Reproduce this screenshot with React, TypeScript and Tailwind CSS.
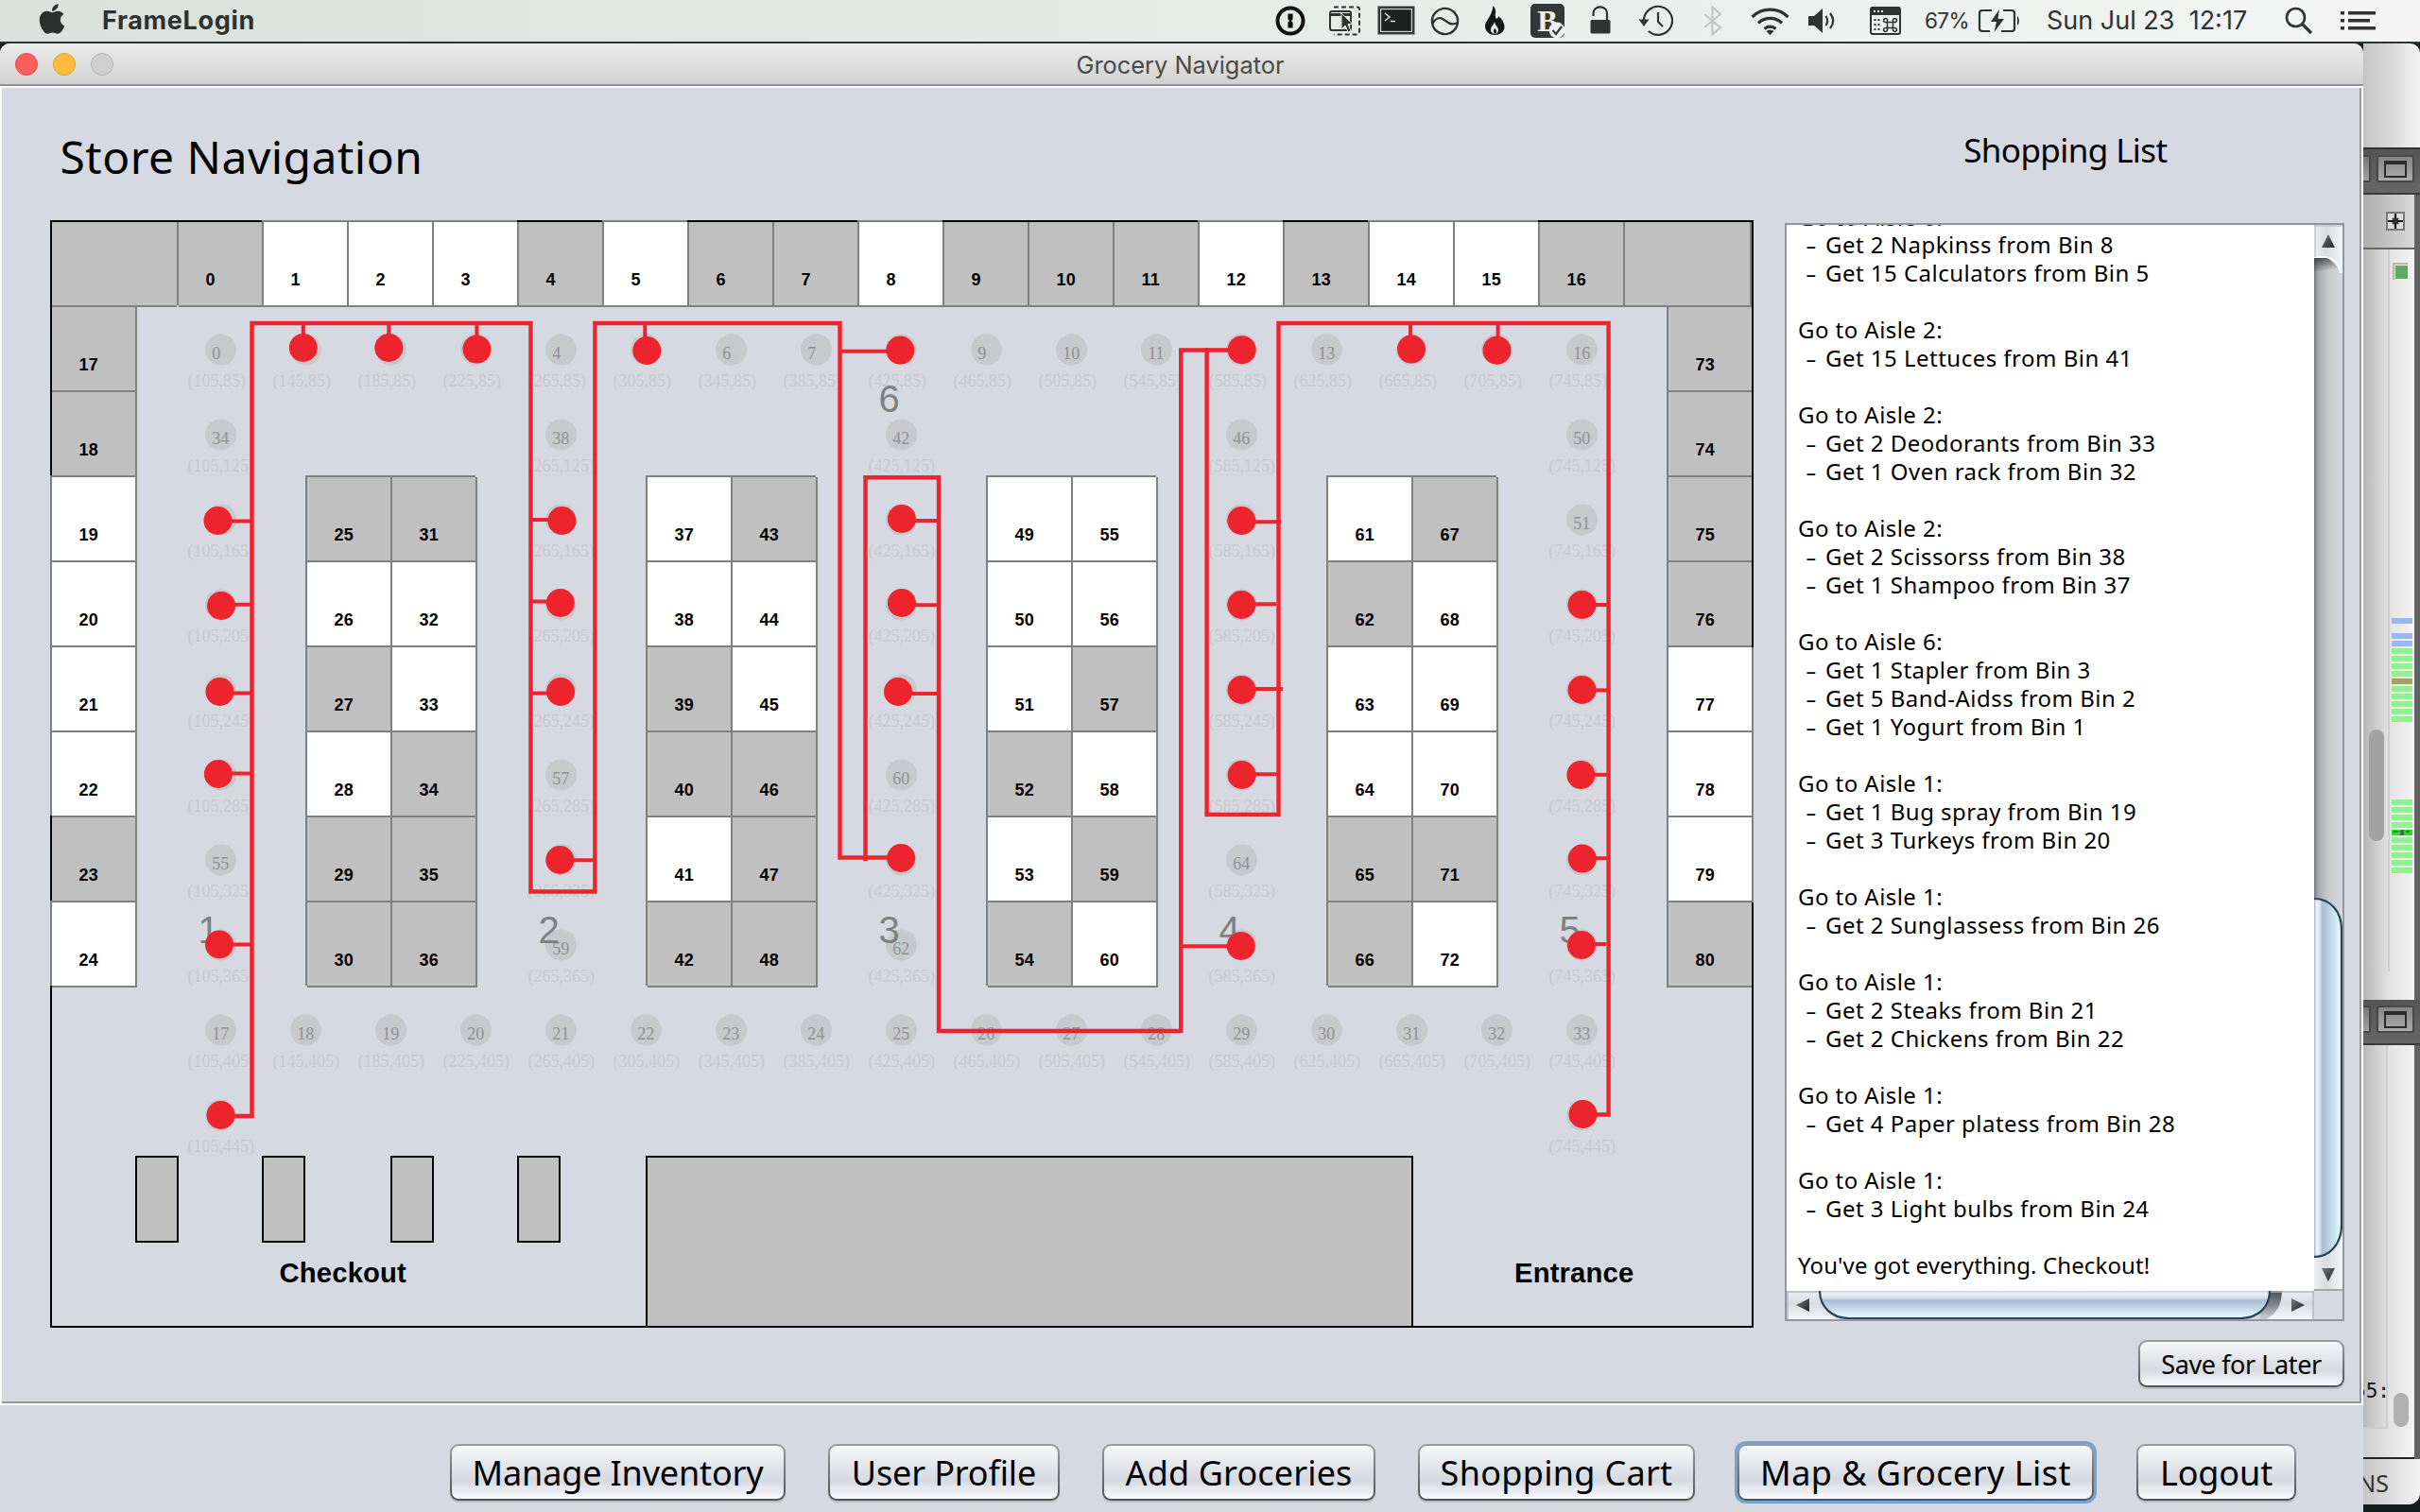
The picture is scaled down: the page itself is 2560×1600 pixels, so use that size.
import { FaApple } from "react-icons/fa";

/* ---------------------------------------------------------------- data */

const WHITE = new Set([
  1, 2, 3, 5, 8, 12, 14, 15, 19, 20, 21, 22, 24, 26, 28, 32, 33, 37, 38, 41, 44, 45, 49, 50, 51, 53, 55, 56, 58, 60,
  61, 63, 64, 68, 69, 70, 72, 77, 78, 79,
]);

const range = (from: number, count: number) => Array.from({ length: count }, (_, i) => from + i);

const TOP_BINS = range(0, 17);
const LEFT_BINS = range(17, 8);
const RIGHT_BINS = range(73, 8);
const SHELVES = [25, 37, 49, 61];

/* Waypoints live in store units; 1 unit is 2.25 px. */
const COLS = [105, 265, 425, 585, 745];
const NODE_IDS: Record<string, number> = {
  "105,125": 34, "265,125": 38, "425,125": 42, "585,125": 46, "745,125": 50,
  "745,165": 51, "265,285": 57, "425,285": 60, "105,325": 55, "585,325": 64,
  "265,365": 59, "425,365": 62,
};
const HIDDEN_TOP = new Set([1, 2, 3, 5, 8, 12, 14, 15]);

type Node = { x: number; y: number; id?: number };
const NODES: Node[] = [
  ...range(0, 17).map((i) => ({ x: 105 + i * 40, y: 85, id: HIDDEN_TOP.has(i) ? undefined : i })),
  ...COLS.flatMap((x) => [125, 165, 205, 245, 285, 325, 365].map((y) => ({ x, y, id: NODE_IDS[`${x},${y}`] }))),
  ...range(0, 17).map((i) => ({ x: 105 + i * 40, y: 405, id: 17 + i })),
  { x: 105, y: 445 },
  { x: 745, y: 445 },
];
const px = (x: number) => 233.5 + (x - 105) * 2.25;
const py = (y: number) => 370 + (y - 85) * 2.25;

const AISLES: [string, number, number][] = [
  ["1", 209.5, 997.5], ["2", 569.5, 997.5], ["3", 929.5, 997.5], ["4", 1289.5, 997.5], ["5", 1649.5, 997.5], ["6", 929.5, 435.5],
];

const ROUTE = [
  "M234 1181H266.5V342H561.4V943.5H629.4V342H888.5V907.5H953",
  "M915.5 909V505.2H993V1091H1249.2V370.5H1313",
  "M1276.6 370.5V862H1352.5V342H1701.6V1179.5H1674",
];

/* stop: centre x, centre y, and the spur that ties it to the route */
const STOPS: [number, number, string][] = [
  [320.8, 368, "M320.8 342V368"], [411.3, 368, "M411.3 342V368"], [504.4, 369.6, "M504.4 342V368"],
  [684.3, 371, "M682.3 342V368"], [952.3, 370.6, "M888 371.8H952"], [1313.7, 370.2, ""],
  [1493, 369.6, "M1492 342V368"], [1583.5, 370.7, "M1584.6 342V368"],
  [230.4, 551, "M230 551.6H266"], [234, 641, "M234 639.8H268"], [232.5, 732, "M232 733.6H268"],
  [230.9, 819, "M231 818.5H268"], [232, 999.5, "M232 999.5H268"], [233.5, 1180, ""],
  [594.4, 551, "M561 550H594"], [592.8, 638, "M560 636.4H593"], [593, 732, "M561 733.6H593"], [592.3, 910, "M592 910.3H629"],
  [953.9, 549, "M954 551H993"], [953.9, 638, "M954 640.3H994"], [950, 732, "M950 734H993"], [953.2, 908, ""],
  [1313.3, 551, "M1313 552.2H1355"], [1313.3, 640, "M1313 639.3H1350"], [1313.5, 730, "M1313 729H1357"],
  [1313.6, 820, "M1313 819.3H1352"], [1312.8, 1001, "M1249 1001.2H1313"],
  [1673.5, 640, "M1673 640H1702"], [1673.5, 730, "M1673 730.4H1703"], [1672.4, 820, "M1672 819.8H1701"],
  [1673.8, 908.6, "M1674 908.2H1701"], [1673, 1000, "M1673 999H1699"], [1674.5, 1179, ""],
];

const LIST: string[] = [
  "Go to Aisle 6:", "- Get 2 Napkinss from Bin 8", "- Get 15 Calculators from Bin 5", "",
  "Go to Aisle 2:", "- Get 15 Lettuces from Bin 41", "",
  "Go to Aisle 2:", "- Get 2 Deodorants from Bin 33", "- Get 1 Oven rack from Bin 32", "",
  "Go to Aisle 2:", "- Get 2 Scissorss from Bin 38", "- Get 1 Shampoo from Bin 37", "",
  "Go to Aisle 6:", "- Get 1 Stapler from Bin 3", "- Get 5 Band-Aidss from Bin 2", "- Get 1 Yogurt from Bin 1", "",
  "Go to Aisle 1:", "- Get 1 Bug spray from Bin 19", "- Get 3 Turkeys from Bin 20", "",
  "Go to Aisle 1:", "- Get 2 Sunglassess from Bin 26", "",
  "Go to Aisle 1:", "- Get 2 Steaks from Bin 21", "- Get 2 Chickens from Bin 22", "",
  "Go to Aisle 1:", "- Get 4 Paper platess from Bin 28", "",
  "Go to Aisle 1:", "- Get 3 Light bulbs from Bin 24", "",
  "You've got everything. Checkout!",
];

/* ------------------------------------------------------------ menu bar */

function MenuIcons() {
  return (
    <div className="ml-auto flex h-[44px] w-[1211px] shrink-0 items-center text-[#2f3332]">
      <svg className="w-[32px] h-[32px]" viewBox="0 0 32 32">
        <circle cx="16" cy="16" r="13.5" fill="none" stroke="#111" strokeWidth="4" />
        <path d="M13.4 8.5h5.2v6l-1.6 1.6 1.6 1.6v5.8h-5.2v-6l1.6-1.6-1.6-1.6z" fill="#111" />
      </svg>
      <svg className="ml-[25px] w-[33px] h-[32px]" viewBox="0 0 33 32" fill="none" stroke="currentColor" strokeWidth="2">
        <rect x="1" y="6" width="22" height="20" rx="2" />
        <path d="M1 9.5h22" strokeWidth="3" />
        <path d="M5 1.5h25a2 2 0 0 1 2 2v25a2 2 0 0 1-2 2H5" strokeDasharray="5 3" />
        <path d="M13 8v17l4-4 3 7 3-1.5-3-7h5z" fill="currentColor" stroke="#e8edea" strokeWidth="1" />
      </svg>
      <svg className="ml-[18px] w-[41px] h-[32px]" viewBox="0 0 41 32">
        <rect x="1.5" y="1.5" width="37" height="28" fill="#1d201f" stroke="#3b3e3d" strokeWidth="2" />
        <rect x="3.6" y="3.6" width="32.8" height="23.8" fill="none" stroke="#cfd3d1" strokeWidth="1.2" />
        <path d="M8 8l5 4-5 4M14 16.5h5" fill="none" stroke="#dde" strokeWidth="1.6" />
      </svg>
      <svg className="ml-[15px] w-[31px] h-[31px]" viewBox="0 0 31 31" fill="none" stroke="currentColor" strokeWidth="2.4">
        <circle cx="15.5" cy="15.5" r="13.6" />
        <path d="M2.5 18C5 13 9 11 13 13s8 8 16 4" />
      </svg>
      <svg className="ml-[26px] w-[22px] h-[32px]" viewBox="0 0 22 32">
        <path d="M9.500 0c5 6 1 9 3 13 1 2 2.500 0 2.500-2 4 3 6.500 7 6.500 11.500C21.500 28 16.500 31 11 31S1 27 1 21.500 8 12 9.500 0z" fill="#161817" />
        <path d="M11 17c-1 4-4 5-4 8.500 0 3 2 4.300 4.500 4.300S15 28 15 25.500s-3-4-4-8.500z" fill="#e9edeb" />
        <path d="M11.500 24c-2 1.500-2 5 0 5.500 2-.5 2-4 0-5.500z" fill="#161817" />
      </svg>
      <span className="relative ml-[27px] flex h-[36px] w-[36px] items-center justify-center rounded-[5px] bg-[#333736] font-['Liberation_Serif'] text-[32px] font-bold leading-none text-[#eef1ef]">
        B
        <svg className="absolute -bottom-[1px] -right-[1px] w-[18px] h-[18px]" viewBox="0 0 18 18">
          <circle cx="9" cy="9" r="8.500" fill="#eef1ef" />
          <path d="M4.500 9l3.500 4 6-8" fill="none" stroke="#333736" strokeWidth="2.200" />
        </svg>
      </span>
      <svg className="ml-[27px] w-[22px] h-[32px]" viewBox="0 0 22 32">
        <path d="M3.500 11V8a6.500 6 0 0 1 14.500 0V16" fill="none" stroke="currentColor" strokeWidth="2.200" />
        <rect x="0.500" y="15" width="21" height="14.500" rx="1.500" fill="currentColor" />
      </svg>
      <svg className="ml-[29px] w-[37px] h-[34px]" viewBox="0 0 37 34" fill="none" stroke="currentColor" strokeWidth="2.200">
        <path d="M6 17A15 15 0 1 1 11 28" />
        <path d="M0.500 15.500h11L6 23z" fill="currentColor" stroke="none" />
        <path d="M21 8v10l5 5" />
      </svg>
      <svg className="ml-[32px] w-[20px] h-[32px]" viewBox="0 0 20 32" fill="none" stroke="#bfc3c1" strokeWidth="2">
        <path d="M1 9l17 14-8.500 7.500V1.500L18 9 1 23" />
      </svg>
      <svg className="ml-[30px] w-[41px] h-[32px]" viewBox="0 0 41 32" fill="none" stroke="currentColor" strokeWidth="3.200">
        <path d="M1.500 12a27 27 0 0 1 38 0M8 18.500a18 18 0 0 1 25 0M14.500 24.500a9 9 0 0 1 12 0" />
        <path d="M16.500 27a5.800 5.800 0 0 1 8 0l-4 4.200z" fill="currentColor" stroke="none" />
      </svg>
      <svg className="ml-[20px] w-[28px] h-[28px]" viewBox="0 0 28 28">
        <path d="M0 9h6l9-8v26l-9-8H0z" fill="currentColor" />
        <path d="M18.500 9c2 3 2 7 0 10M23 6c4 5 4 11 0 16" fill="none" stroke="currentColor" strokeWidth="2.200" />
      </svg>
      <svg className="ml-[37px] w-[33px] h-[30px]" viewBox="0 0 33 30" fill="none" stroke="currentColor" strokeWidth="2">
        <rect x="1" y="1" width="31" height="28" rx="2" />
        <path d="M1 5.500h31" strokeWidth="7" />
        <path d="M4 5h2M8 5h2M12 5h2" stroke="#eef1ef" />
        <path d="M4.500 14h2M8.500 14h2M4.500 19h2M8.500 19h2M4.500 24h2M8.500 24h2" />
        <path d="M18.500 16.500h6v6h-6zM18.500 16.500h-1.500a2 2 0 1 1 1.500-1.500zM24.500 16.500V15a2 2 0 1 1 1.500 1.500zM24.500 22.500H26a2 2 0 1 1-1.500 1.500zM18.500 22.500V24a2 2 0 1 1-1.500-1.500z" strokeWidth="1.600" />
      </svg>
      <span className="ml-[25px] w-[56px] font-['Inter'] text-[22.500px] tracking-[-0.600px]">67%</span>
      <svg className="w-[46px] h-[28px]" viewBox="0 0 46 28" fill="none" stroke="currentColor" strokeWidth="2.200">
        <path d="M15 3H5a3 3 0 0 0-3 3v16a3 3 0 0 0 3 3h8M27 3h9a3 3 0 0 1 3 3v16a3 3 0 0 1-3 3H25" />
        <path d="M42 9c2.500 2 2.500 8 0 10z" fill="currentColor" stroke="none" />
        <path d="M23 2l-9 13h6l-2.500 11L28 12h-6.500z" fill="currentColor" stroke="none" />
      </svg>
      <span className="ml-[27px] w-[252px] whitespace-pre font-['Inter'] text-[27px] tracking-[0px]">Sun Jul 23  12:17</span>
      <svg className="w-[30px] h-[30px]" viewBox="0 0 30 30" fill="none" stroke="currentColor" strokeWidth="2.600">
        <circle cx="11.500" cy="11.500" r="9.500" />
        <path d="M18.500 18.500L28 28" strokeWidth="3.200" />
      </svg>
      <svg className="ml-[29px] w-[37px] h-[22px]" viewBox="0 0 37 22" fill="currentColor">
        <path d="M0 1h4v3.500H0zM0 9h4v3.500H0zM0 17h4v3.500H0zM8 1h29v3.500H8zM8 9h23v3.500H8zM8 17h29v3.500H8z" />
      </svg>
    </div>
  );
}

/* ----------------------------------------------------------- store map */

type Edge = "top" | "left" | "right" | "none";

function Bin({ n, edge = "none" }: { n: number; edge?: Edge }) {
  const white = WHITE.has(n);
  const border = white
    ? "z-10 bg-white shadow-[inset_2px_2px_0_#808080,2px_2px_0_#808080]"
    : edge === "top"
      ? "bg-[#c0c0c0] shadow-[inset_0_2px_0_#000,inset_2px_0_0_#808080,2px_2px_0_#808080]"
      : edge === "left"
        ? "bg-[#c0c0c0] shadow-[inset_2px_0_0_#000,inset_0_2px_0_#808080,2px_2px_0_#808080]"
        : edge === "right"
          ? "bg-[#c0c0c0] shadow-[inset_2px_2px_0_#808080,0_2px_0_#808080,2px_2px_0_#000]"
          : "bg-[#c0c0c0] shadow-[inset_2px_2px_0_#808080,2px_2px_0_#808080]";
  return (
    <div className={`relative h-[90px] w-[90px] shrink-0 pl-[30.500px] pt-[52px] font-['Liberation_Sans'] text-[18px] font-bold leading-[22px] tracking-[0.200px] text-black ${border}`}>
      {n}
    </div>
  );
}

function Column({ bins, edge }: { bins: number[]; edge?: Edge }) {
  return (
    <div className="flex flex-col">
      {bins.map((n) => (
        <Bin key={n} n={n} edge={edge} />
      ))}
    </div>
  );
}

function Register() {
  return <div className="h-[92px] w-[46px] border-2 border-black bg-[#c0c0c0]" />;
}

function RouteOverlay() {
  return (
    <svg className="absolute left-0 top-0 z-20 h-[1172px] w-[1802px]" viewBox="53 233 1802 1172">
      <g fontFamily="'Liberation Serif', serif" fontSize="18">
        {NODES.map((n) => (
          <g key={`${n.x},${n.y}`}>
            <circle cx={px(n.x)} cy={py(n.y)} r="16.500" fill="#c7c9cd" />
            {n.id !== undefined && (
              <text x={px(n.x) - 9.300} y={py(n.y) + 9.600} fill="#8f9196">
                {n.id}
              </text>
            )}
            <text x={px(n.x) - 35} y={py(n.y) + 39} fill="#c8cace">{`(${n.x},${n.y})`}</text>
          </g>
        ))}
      </g>
      <g fontFamily="'Liberation Sans', sans-serif" fontSize="40" fill="#808080">
        {AISLES.map(([t, x, y]) => (
          <text key={t} x={x} y={y}>
            {t}
          </text>
        ))}
      </g>
      <g fill="none" stroke="#ed232d" strokeWidth="4.400" strokeLinecap="square">
        {ROUTE.map((d) => (
          <path key={d} d={d} />
        ))}
      </g>
      <g stroke="#ed232d" strokeWidth="4" fill="none">
        {STOPS.map(([x, y, spur]) => (
          <g key={`${x}-${y}`}>
            {spur && <path d={spur} />}
            <circle cx={x} cy={y} r="15" fill="#ed232d" stroke="none" />
          </g>
        ))}
      </g>
    </svg>
  );
}

function StoreMap() {
  return (
    <div className="relative h-[1172px] w-[1802px] shrink-0">
      <div className="absolute inset-0 border-2 border-black" />
      <div className="flex">
        <div className="h-[90px] w-[134px] bg-[#c0c0c0] shadow-[inset_2px_2px_0_#000,0_2px_0_#808080]" />
        {TOP_BINS.map((n) => (
          <Bin key={n} n={n} edge="top" />
        ))}
        <div className="relative h-[90px] w-[136px] bg-[#c0c0c0] shadow-[inset_0_2px_0_#000,inset_2px_0_0_#808080,inset_-2px_0_0_#808080,0_2px_0_#808080,2px_0_0_#000]" />
      </div>
      <div className="flex h-[720px] w-[1800px] justify-between">
        <Column bins={LEFT_BINS} edge="left" />
        {SHELVES.map((first) => (
          <div key={first} className="flex pt-[180px]">
            <Column bins={range(first, 6)} />
            <Column bins={range(first + 6, 6)} />
          </div>
        ))}
        <Column bins={RIGHT_BINS} edge="right" />
      </div>
      <div className="flex pt-[180px] font-['Liberation_Sans'] text-[29.250px] font-bold leading-[34px] text-black">
        <div className="w-[630px]">
          <div className="flex pl-[90px]">
            <Register />
            <div className="w-[88px]" />
            <Register />
            <div className="w-[90px]" />
            <Register />
            <div className="w-[88px]" />
            <Register />
          </div>
          <div className="pl-[242.500px] pt-[15px] tracking-[0.150px]">Checkout</div>
        </div>
        <div className="h-[182px] w-[812px] border-2 border-black bg-[#c0c0c0]" />
        <div className="pl-[107px] pt-[107px] tracking-[0.150px]">Entrance</div>
      </div>
      <RouteOverlay />
    </div>
  );
}

/* -------------------------------------------------------- shopping list */

function VerticalScrollbar() {
  return (
    <svg className="h-[1128px] w-[30px] shrink-0" viewBox="0 0 30 1128">
      <defs>
        <linearGradient id="vtrack">
          <stop offset="0" stopColor="#77797c" />
          <stop offset="0.150" stopColor="#a9abae" />
          <stop offset="0.500" stopColor="#c9cbcf" />
          <stop offset="1" stopColor="#d4d6dc" />
        </linearGradient>
        <linearGradient id="vthumb">
          <stop offset="0" stopColor="#9fb0c4" />
          <stop offset="0.080" stopColor="#eef2f8" />
          <stop offset="0.200" stopColor="#dce6f0" />
          <stop offset="0.300" stopColor="#a7bdd4" />
          <stop offset="0.650" stopColor="#c4dcec" />
          <stop offset="1" stopColor="#e6ffff" />
        </linearGradient>
        <linearGradient id="vbtn">
          <stop offset="0" stopColor="#eceef1" />
          <stop offset="0.450" stopColor="#d8dbe0" />
          <stop offset="1" stopColor="#f6f9fb" />
        </linearGradient>
        <linearGradient id="vshade" x1="0" y1="0" x2="0.300" y2="1">
          <stop offset="0" stopColor="#3c3e41" />
          <stop offset="1" stopColor="#3c3e41" stopOpacity="0" />
        </linearGradient>
        <linearGradient id="arrow" x1="0" y1="0" x2="1" y2="1">
          <stop offset="0" stopColor="#777" />
          <stop offset="1" stopColor="#222" />
        </linearGradient>
      </defs>
      <rect width="30" height="1128" fill="url(#vtrack)" />
      <path d="M0 34H14L26 46 0 50z" fill="url(#vshade)" />
      <path d="M0 0H30V51H28C26 42 20 34 11 34H0z" fill="url(#vbtn)" />
      <path d="M0 34H11C20 34 26 42 28 51" fill="none" stroke="#f7f9fb" strokeWidth="2" />
      <path d="M0 1H30M1 0V34" stroke="#c6c8cb" strokeWidth="1.500" />
      <path d="M15 10L22 24H8z" fill="url(#arrow)" />
      <path d="M0 1093C14 1092 24 1082 30 1066V1128H0z" fill="url(#vbtn)" />
      <path d="M0 1127H30" stroke="#a5a7ab" strokeWidth="2" />
      <path d="M0 713C17 713 29 726 29 746V1058C29 1078 17 1092 0 1092z" fill="url(#vthumb)" />
      <path d="M0 713C17 713 29 726 29 746V1058C29 1078 17 1092 0 1092" fill="none" stroke="#2b4257" strokeWidth="2.200" />
      <path d="M15 1118L22 1104H8z" fill="url(#arrow)" />
    </svg>
  );
}

function HorizontalScrollbar() {
  return (
    <svg className="h-[30px] w-[558px] shrink-0" viewBox="0 0 558 30">
      <defs>
        <linearGradient id="hthumb" x2="0" y2="1">
          <stop offset="0" stopColor="#c3cfdd" />
          <stop offset="0.100" stopColor="#eef2f8" />
          <stop offset="0.250" stopColor="#d4e0ec" />
          <stop offset="0.350" stopColor="#a7bdd4" />
          <stop offset="0.650" stopColor="#c4dcec" />
          <stop offset="1" stopColor="#e6ffff" />
        </linearGradient>
        <linearGradient id="hbtn" x2="0" y2="1">
          <stop offset="0" stopColor="#eceef1" />
          <stop offset="0.450" stopColor="#d8dbe0" />
          <stop offset="1" stopColor="#f6f9fb" />
        </linearGradient>
        <linearGradient id="htrack" x2="0" y2="1">
          <stop offset="0" stopColor="#4b4d50" />
          <stop offset="0.500" stopColor="#85878b" />
          <stop offset="1" stopColor="#d0d2d8" />
        </linearGradient>
      </defs>
      <rect width="558" height="30" fill="#d6d9e1" />
      <path d="M0 0H35C35 12 42 24 52 30H0z" fill="url(#hbtn)" />
      <path d="M505 0H524C524 14 520 22 512 30H500z" fill="url(#htrack)" />
      <path d="M558 0H524C524 14 519 23 508 30H558z" fill="url(#hbtn)" />
      <path d="M0 1H558M1 0V30M557 0V30" stroke="#b4b6ba" strokeWidth="1.500" />
      <path d="M35 0C35 17 48 29 66 29H480C499 29 511 17 511 0z" fill="url(#hthumb)" />
      <path d="M35 0C35 17 48 29 66 29H480C499 29 511 17 511 0" fill="none" stroke="#2b4257" strokeWidth="2.200" />
      <path d="M10 15L24 8V22z" fill="url(#arrow)" />
      <path d="M548 15L534 8V22z" fill="url(#arrow)" />
    </svg>
  );
}

function ShoppingList() {
  return (
    <div className="h-[1162px] w-[592px] border-2 border-[#9297a3] bg-[#d6d9e1]">
      <div className="flex h-[1128px]">
        <div className="w-[558px] overflow-hidden bg-white pl-[12px]">
          <div className="-mt-[24px] font-['Noto_Sans'] text-[24px] leading-[30px] text-black">
            {LIST.map((line, i) =>
              line.startsWith("- ") ? (
                <div key={i} className="flex h-[30px] whitespace-pre tracking-[0.480px]">
                  <span className="w-[29px] pl-[10px]">
                    <span className="inline-block scale-x-150">-</span>
                  </span>
                  {line.slice(2)}
                </div>
              ) : (
                <div
                  key={i}
                  className={`h-[30px] whitespace-pre ${i === 0 ? "pt-px" : ""} ${line.startsWith("You") ? "tracking-[0.120px]" : "tracking-[0.450px]"}`}
                >
                  {line}
                </div>
              ),
            )}
          </div>
        </div>
        <VerticalScrollbar />
      </div>
      <HorizontalScrollbar />
    </div>
  );
}

/* -------------------------------------------------------------- buttons */

function Button({ label, size, focused = false }: { label: string; size: string; focused?: boolean }) {
  return (
    <div
      className={`rounded-[9px] bg-linear-to-b from-[#989ca3] to-[#505358] p-[2px] ${size} ${
        focused ? "shadow-[0_0_0_3px_#73a4d1]" : "shadow-[0_2px_1px_#b9bcc2]"
      }`}
    >
      <div className="flex h-full items-center justify-center whitespace-nowrap rounded-[7px] bg-linear-to-b from-[#f7f8fa] via-[#d6d9e0] via-65% to-[#fbfcff] pt-[2px] font-['Noto_Sans'] text-black">
        {label}
      </div>
    </div>
  );
}

/* --------------------------------------------- editor window at the right */

const MARKS: [string, string][] = [
  ["bg-[#96b9ee]", "mb-[10px]"], ["bg-[#96b9ee]", "mb-[2px]"], ["bg-[#96b9ee]", "mb-[2px]"],
  ["bg-[#90f290]", "mb-[2px]"], ["bg-[#90f290]", "mb-[2px]"], ["bg-[#90f290]", "mb-[2px]"], ["bg-[#90f290]", "mb-[2px]"],
  ["bg-[#a5a05f]", "mb-[2px]"],
  ["bg-[#90f290]", "mb-[2px]"], ["bg-[#90f290]", "mb-[2px]"], ["bg-[#90f290]", "mb-[2px]"], ["bg-[#90f290]", "mb-[2px]"],
  ["bg-[#90f290]", "mb-[82px]"],
  ["bg-[#90f290]", "mb-[2px]"], ["bg-[#90f290]", "mb-[2px]"], ["bg-[#90f290]", "mb-[2px]"], ["bg-[#90f290]", "mb-[2px]"],
  ["bg-[#10ee10]", "mb-[2px]"],
  ["bg-[#90f290]", "mb-[2px]"], ["bg-[#90f290]", "mb-[2px]"], ["bg-[#90f290]", "mb-[2px]"], ["bg-[#90f290]", "mb-[2px]"],
  ["bg-[#90f290]", ""],
];

function PaneHeader() {
  return (
    <div className="flex h-[48px] w-[60px] shrink-0 items-start gap-[6px] border-b-2 border-[#3a3a3a] bg-linear-to-b from-[#555] to-[#666] pt-[6px]">
      <div className="h-[29px] w-[8px] rounded-r-[3px] border-2 border-l-0 border-[#474747] bg-linear-to-b from-[#777] to-[#a2a2a2]" />
      <div className="flex h-[29px] w-[40px] items-center justify-center rounded-[3px] border-2 border-[#474747] bg-linear-to-b from-[#858585] to-[#acacac]">
        <div className="h-[18px] w-[24px] border-2 border-t-4 border-[#2b2b2b]" />
      </div>
    </div>
  );
}

function EditorWindow() {
  return (
    <div className="flex h-[1554px] w-[60px] flex-col overflow-hidden bg-[#141c1e]">
      <div className="h-[112px] shrink-0 rounded-tr-[10px] border-b-2 border-[#333] bg-linear-to-r from-[#c4c4c4] to-[#f2f2f2]" />
      <PaneHeader />
      <div className="flex shrink-0 bg-[#626262]">
        <div className="w-[54px]">
          <div className="h-[58px] border-b-2 border-[#666] bg-linear-to-r from-[#adadad] to-[#d9d9d9] pl-[24px] pt-[18px]">
            <svg className="h-[20px] w-[20px]" viewBox="0 0 20 20">
              <rect x="1" y="1" width="18" height="18" fill="#ddd" stroke="#777" strokeWidth="2" />
              <path d="M10 2v16M2 10h16" stroke="#111" strokeWidth="2.200" />
              <path d="M7 7l6 6M13 7l-6 6" stroke="#333" strokeWidth="2" />
            </svg>
          </div>
          <div className="flex h-[794px] bg-linear-to-r from-[#b7b7b7] via-[#e3e3e3] to-[#f4f4f4]">
            <div className="h-[764px] w-[28px] border-r-2 border-[#cdcdcd] pl-[6px] pt-[508px]">
              <div className="h-[118px] w-[16px] rounded-full bg-[#a2a2a2]" />
            </div>
            <div className="pl-[2px] pt-[14px]">
              <div className="ml-[1px] h-[18px] w-[16px] border-l-2 border-t-2 border-[#bab6a8] pl-px pt-px">
                <div className="h-[14px] w-[13px] bg-[#5fa866]" />
              </div>
              <div className="pt-[358px]">
                {MARKS.map(([color, gap], i) => (
                  <div key={i} className={`h-[6px] w-[22px] ${color} ${gap}`}>
                    {i === 17 && (
                      <svg className="h-[6px] w-[22px]" viewBox="0 0 22 6">
                        <path d="M1 2h6M15 2h4" stroke="#5a5a5a" strokeWidth="1.500" />
                        <rect x="9" y="0" width="4" height="6" fill="#4c6a4c" />
                      </svg>
                    )}
                  </div>
                ))}
              </div>
            </div>
          </div>
        </div>
      </div>
      <PaneHeader />
      <div className="h-[438px] shrink-0 bg-[#626262] pr-[6px]">
        <div className="flex h-[406px] bg-linear-to-r from-[#b9b9b9] via-[#e2e2e2] to-[#f3f3f3]">
          <div className="flex w-[26px] shrink-0 items-end justify-end border-b-2 border-r-2 border-[#cdcdcd] pb-[25px] font-['DejaVu_Sans_Mono'] text-[21px] leading-[26px] text-[#111]">
            <span className="-mr-[4px]">55:</span>
          </div>
          <div className="pl-[6px] pt-[368px]">
            <div className="h-[36px] w-[16px] rounded-full bg-[#b1b1b1]" />
          </div>
        </div>
        <div className="h-[30px] bg-linear-to-r from-[#cfcfcf] to-[#f6f6f6]" />
        <div className="h-[2px] bg-[#222]" />
      </div>
      <div className="flex h-[48px] shrink-0 justify-end overflow-hidden rounded-br-[12px] bg-linear-to-r from-[#c6c6c6] to-[#f4f4f4] pr-[33px] font-['Noto_Sans'] text-[25px] leading-[50px] text-[#333]">
        <span className="shrink-0">NS</span>
      </div>
    </div>
  );
}

/* ------------------------------------------------------------------ app */

export default function App() {
  return (
    <div className="flex h-[1600px] w-[2560px] flex-col overflow-hidden bg-[#141c1e]">
      <div className="flex h-[44px] items-center bg-linear-to-r from-[#dbe1dd] via-[#e6ebe8] to-[#f4f5f4] pl-[41px]">
        <FaApple className="-mt-[5px] h-[36px] w-[28px] text-[#2b2f2e]" />
        <span className="ml-[39px] font-['Inter'] text-[27px] font-bold tracking-[0.650px] text-[#2d3130]">FrameLogin</span>
        <MenuIcons />
      </div>
      <div className="h-[2px] bg-[#2b3335]" />
      <div className="flex h-[1554px]">
        <div className="flex w-[2500px] shrink-0 flex-col overflow-hidden rounded-t-[10px] bg-[#d6d9e1]">
          <div className="grid h-[45px] grid-cols-[1fr_auto_1fr] items-center border-b-2 border-[#929292] bg-linear-to-b from-[#ececec] to-[#d2d2d2]">
            <div className="flex gap-[16px] pl-[16px]">
              <div className="h-[24px] w-[24px] rounded-full border border-[#e2463f] bg-[#fc605c]" />
              <div className="h-[24px] w-[24px] rounded-full border border-[#dfa023] bg-[#fdbc40]" />
              <div className="h-[24px] w-[24px] rounded-full border border-[#b4b4b4] bg-[#d0d0d0]" />
            </div>
            <div className="pr-[3px] pt-[3px] font-['Inter'] text-[25.400px] leading-[30px] text-[#4a4a4a]">Grocery Navigator</div>
            <div />
          </div>
          <div className="h-[1396px] border-b-2 border-l-2 border-r-[2px] border-t-2 border-white">
            <div className="flex h-[1392px] border-b-2 border-r-2 border-[#9799a0] pl-[51px]">
              <div className="w-[1835px] pt-[43px]">
                <h1 className="mb-[37px] pl-[10.500px] font-['Noto_Sans'] text-[48px] leading-[60px] tracking-[0.480px] text-black">
                  Store Navigation
                </h1>
                <StoreMap />
              </div>
              <div className="flex w-[592px] flex-col items-end pt-[44px]">
                <h2 className="mb-[55px] mr-[187.500px] font-['Noto_Sans'] text-[35px] leading-[44px] tracking-[-0.600px] text-black">
                  Shopping List
                </h2>
                <ShoppingList />
                <div className="h-[20px]" />
                <Button label="Save for Later" size="h-[50px] w-[218px] text-[27px] tracking-[-0.400px]" />
              </div>
            </div>
          </div>
          <div className="flex gap-[45px] pl-[476px] pt-[41px]">
            <Button label="Manage Inventory" size="h-[60px] w-[355px] text-[36px] tracking-[-0.150px]" />
            <Button label="User Profile" size="h-[60px] w-[245px] text-[36px] tracking-[-0.150px]" />
            <Button label="Add Groceries" size="h-[60px] w-[289px] text-[36px] tracking-[0.150px]" />
            <Button label="Shopping Cart" size="h-[60px] w-[293px] text-[36px] tracking-[0.300px]" />
            <Button label="Map & Grocery List" size="h-[60px] w-[377px] text-[36px] tracking-[0.450px]" focused />
            <Button label="Logout" size="h-[60px] w-[169px] text-[36px] tracking-[-0.100px]" />
          </div>
        </div>
        <EditorWindow />
      </div>
    </div>
  );
}
